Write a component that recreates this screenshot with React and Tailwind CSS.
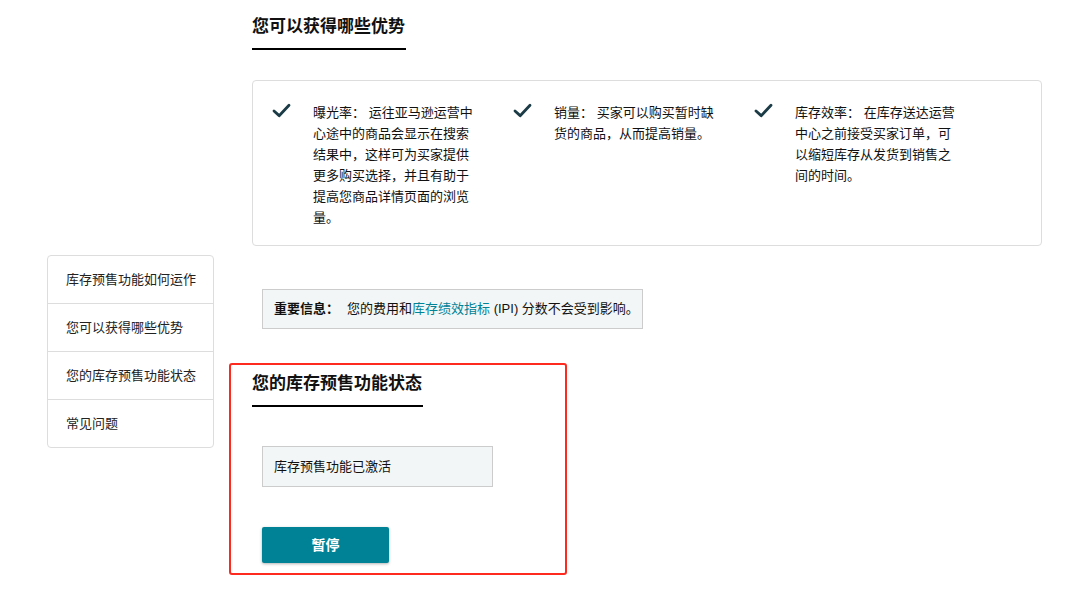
import React from 'react';

const font = { fontFamily: '"Liberation Sans", "Noto Sans CJK SC", sans-serif' };

const Check = () => (
  <svg viewBox="0 0 20 16" className="w-[19px] h-[15px] shrink-0 mt-[1px]" fill="none">
    <path d="M2 8.5 L7.5 13.5 L18 2.5" stroke="#1b3b46" strokeWidth="3" strokeLinecap="round" strokeLinejoin="round" />
  </svg>
);

const benefits = [
  ['曝光率：', ['运往亚马逊运营中', '心途中的商品会显示在搜索', '结果中，这样可为买家提供', '更多购买选择，并且有助于', '提高您商品详情页面的浏览', '量。']],
  ['销量：', ['买家可以购买暂时缺', '货的商品，从而提高销量。']],
  ['库存效率：', ['在库存送达运营', '中心之前接受买家订单，可', '以缩短库存从发货到销售之', '间的时间。']],
];

const navItems = ['库存预售功能如何运作', '您可以获得哪些优势', '您的库存预售功能状态', '常见问题'];

const Heading = ({ children }) => (
  <div className="inline-block">
    <h2 className="text-[17px] font-bold text-[#111] leading-[24px] pr-[1px]">{children}</h2>
    <div className="h-[2px] bg-black mt-[9px]" />
  </div>
);

export default function App() {
  return (
    <div className="w-[1079px] h-[597px] bg-white overflow-hidden text-[13px] text-[#111]" style={font}>
      <div className="flex">
        {/* Side navigation */}
        <div className="w-[252px] shrink-0 pl-[47px] pt-[255px]">
          <div className="w-[167px] border border-[#ddd] rounded-[4px]">
            {navItems.map((item, i) => (
              <div
                key={item}
                className={`h-[47px] flex items-center pl-[18px] text-[13px] text-[#222] ${i > 0 ? 'border-t border-[#ddd] h-[48px]' : ''}`}
              >
                {item}
              </div>
            ))}
          </div>
        </div>

        {/* Main content */}
        <div className="flex-1 pt-[15px]">
          <Heading>您可以获得哪些优势</Heading>

          <div className="mt-[30px] w-[790px] h-[166px] border border-[#ddd] rounded-[4px] flex pt-[21px]">
            {benefits.map(([label, lines]) => (
              <div key={label} className="w-[241px] flex pl-[19px]">
                <Check />
                <p className="ml-[22px] leading-[21px] text-[13px] text-[#111]">
                  {label} {lines.map((l, i) => (
                    <React.Fragment key={i}>
                      {i > 0 && <br />}
                      {l}
                    </React.Fragment>
                  ))}
                </p>
              </div>
            ))}
          </div>

          <div className="mt-[43px] ml-[10px] w-[381px] h-[40px] bg-[#f3f6f6] border border-[#ccc] flex items-center pl-[11px] text-[13px]">
            <span className="font-bold">重要信息：</span>
            <span className="ml-[8px]">您的费用和</span>
            <span className="text-[#008296]">库存绩效指标</span>
            <span>&nbsp;(IPI) 分数不会受到影响。</span>
          </div>

          {/* Status section */}
          <div className="mt-[34px] -ml-[23px] w-[338px] h-[212px] border-2 border-[#ff2a1f] rounded-[3px] pl-[21px] pt-[7px]">
            <Heading>您的库存预售功能状态</Heading>
            <div className="mt-[39px] ml-[10px] w-[231px] h-[41px] bg-[#f3f6f6] border border-[#ccc] flex items-center pl-[11px]">
              库存预售功能已激活
            </div>
            <button className="mt-[40px] ml-[10px] w-[127px] h-[36px] bg-[#008296] text-white font-bold text-[14px] rounded-[2px] shadow-[0_1px_3px_rgba(0,0,0,0.3)]">
              暂停
            </button>
          </div>
        </div>
      </div>
    </div>
  );
}
